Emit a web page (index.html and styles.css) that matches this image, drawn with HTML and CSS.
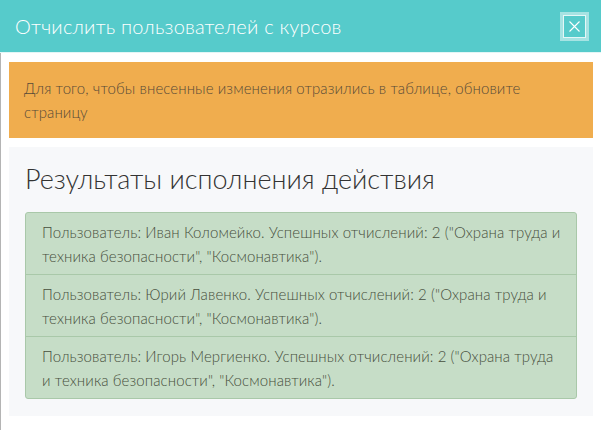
FILE: index.html
```html
<!DOCTYPE html>
<html lang="ru">
<head>
    <meta charset="UTF-8">
    <meta name="viewport" content="width=device-width, initial-scale=1.0">
    <title>Отчислить пользователей с курсов</title>
    <link rel="stylesheet" href="styles.css">
</head>
<body>
    <div class="modal">
        <div class="modal-header">
            <h4 class="modal-title">Отчислить пользователей с курсов</h4>
            <button class="close" type="button" aria-label="Закрыть">
                <svg width="11" height="11" viewBox="0 0 11 11"><path d="M0.5 0.5 L10.5 10.5 M10.5 0.5 L0.5 10.5" stroke="#fff" stroke-width="1.1" fill="none"/></svg>
            </button>
        </div>
        <div class="modal-body">
            <div class="alert-warning">Для того, чтобы внесенные изменения отразились в таблице, обновите страницу</div>
            <div class="results">
                <h2>Результаты исполнения действия</h2>
                <ul class="list-group">
                    <li>Пользователь: Иван Коломейко. Успешных отчислений: 2 ("Охрана труда и техника безопасности", "Космонавтика").</li>
                    <li>Пользователь: Юрий Лавенко. Успешных отчислений: 2 ("Охрана труда и техника безопасности", "Космонавтика").</li>
                    <li>Пользователь: Игорь Мергиенко. Успешных отчислений: 2 ("Охрана труда и техника безопасности", "Космонавтика").</li>
                </ul>
            </div>
        </div>
    </div>
</body>
</html>
```

FILE: styles.css
```css
body { margin: 0; font-family: Lato, "Open Sans", sans-serif; background: #fff; }
.modal { width: 601px; height: 430px; overflow: hidden; }
.modal-header { height: 52px; background: #56cbcb; border-bottom: 1px solid #e3f6f6; display: flex; align-items: center; justify-content: space-between; padding: 0 12px 0 15px; }
.modal-title { margin: 0; font-size: 20px; font-weight: 300; color: #fff; letter-spacing: 0.2px; }
.close { width: 29px; height: 29px; margin-top: 1px; padding: 0; background: #56cbcb; border: 3px solid #a6e3e3; box-shadow: inset 0 0 0 1px #e4f7f7; display: flex; align-items: center; justify-content: center; cursor: pointer; }
.modal-body { border-left: 1px solid #b4b4b4; padding: 9px 8px 0 8px; height: 368px; }
.alert-warning { background: #f0ad4e; color: #574b38; font-size: 15px; font-weight: 300; line-height: 24px; letter-spacing: 0.1px; padding: 14px 15px; }
.results { background: #f7f8fa; margin-top: 9px; padding: 14px 16px 17px 16px; }
.results h2 { margin: 0 0 15px 0; font-size: 27px; font-weight: 300; color: #333; line-height: 36px; }
.list-group { list-style: none; margin: 0; padding: 0; background: #c6ddc7; border: 1px solid #a9c8a9; border-radius: 3px; }
.list-group li { padding: 7px 15px 6px 16px; font-size: 15px; font-weight: 300; line-height: 24px; letter-spacing: 0.1px; color: #464f3c; border-bottom: 1px solid #a9c8a9; }
.list-group li:last-child { border-bottom: none; }
```
